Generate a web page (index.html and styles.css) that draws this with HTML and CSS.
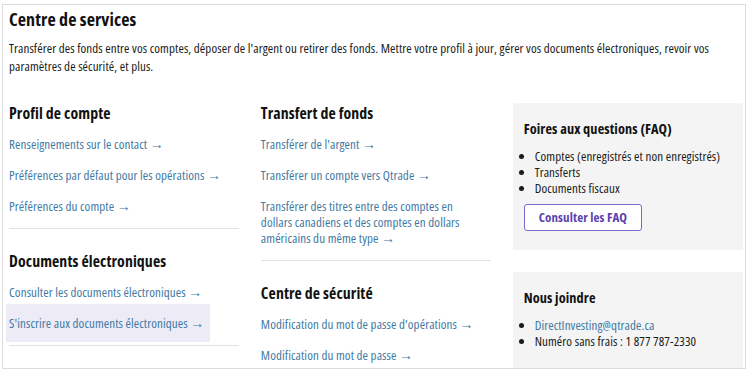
FILE: index.html
```html
<!DOCTYPE html>
<html lang="fr-CA">
<head>
    <meta charset="UTF-8">
    <meta name="viewport" content="width=device-width, initial-scale=1.0">
    <title>Centre de services</title>
    <link rel="stylesheet" href="styles.css">
</head>
<body>
    <div class="container">
        <h1>Centre de services</h1>
        <p class="intro">Transférer des fonds entre vos comptes, déposer de l'argent ou retirer des fonds. Mettre votre profil à jour, gérer vos documents électroniques, revoir vos paramètres de sécurité, et plus.</p>

        <div class="columns">
            <div class="column">
                <div class="link-section">
                    <h2>Profil de compte</h2>
                    <ul class="links">
                        <li><a href="#">Renseignements sur le contact <span class="arrow">→</span></a></li>
                        <li><a href="#">Préférences par défaut pour les opérations <span class="arrow">→</span></a></li>
                        <li><a href="#">Préférences du compte <span class="arrow">→</span></a></li>
                    </ul>
                </div>
                <div class="link-section">
                    <h2>Documents électroniques</h2>
                    <ul class="links">
                        <li><a href="#">Consulter les documents électroniques <span class="arrow">→</span></a></li>
                        <li><a href="#" class="is-hover">S'inscrire aux documents électroniques <span class="arrow">→</span></a></li>
                    </ul>
                </div>
            </div>

            <div class="column">
                <div class="link-section">
                    <h2>Transfert de fonds</h2>
                    <ul class="links">
                        <li><a href="#">Transférer de l'argent <span class="arrow">→</span></a></li>
                        <li><a href="#">Transférer un compte vers Qtrade <span class="arrow">→</span></a></li>
                        <li><a href="#">Transférer des titres entre des comptes en dollars canadiens et des comptes en dollars américains du même type <span class="arrow">→</span></a></li>
                    </ul>
                </div>
                <div class="link-section">
                    <h2>Centre de sécurité</h2>
                    <ul class="links">
                        <li><a href="#">Modification du mot de passe d'opérations <span class="arrow">→</span></a></li>
                        <li><a href="#">Modification du mot de passe <span class="arrow">→</span></a></li>
                    </ul>
                </div>
            </div>

            <div class="column">
                <div class="info-box">
                    <h3>Foires aux questions (FAQ)</h3>
                    <ul class="bullets">
                        <li>Comptes (enregistrés et non enregistrés)</li>
                        <li>Transferts</li>
                        <li>Documents fiscaux</li>
                    </ul>
                    <a href="#" class="btn-outline">Consulter les FAQ</a>
                </div>
                <div class="info-box">
                    <h3>Nous joindre</h3>
                    <ul class="bullets">
                        <li><a href="#">DirectInvesting@qtrade.ca</a></li>
                        <li>Numéro sans frais : 1 877 787-2330</li>
                    </ul>
                </div>
            </div>
        </div>
    </div>
</body>
</html>
```

FILE: styles.css
```css
body {
    font-family: "Open Sans", "DejaVu Sans Condensed", sans-serif;
    font-stretch: 80%;
    letter-spacing: 0.1px;
    color: #1a1a1a;
    background-color: #ffffff;
    margin: 0;
    padding: 0;
}

.container {
    margin: 4px 0 0 2px;
    width: 744px;
    height: 365px;
    box-sizing: border-box;
    border: 1px solid #dcdcdc;
    padding: 3px 2px 0 6px;
    overflow: hidden;
}

h1 {
    font-size: 18px;
    line-height: 22px;
    margin: 0;
    color: #111;
}

.intro {
    font-size: 13px;
    line-height: 18px;
    margin: 9px 0 0;
}

.columns {
    display: grid;
    grid-template-columns: repeat(3, 1fr);
    column-gap: 21.5px;
    margin-top: 28px;
}

.link-section {
    padding-bottom: 6px;
    border-bottom: 1px solid #e2e2e2;
}

.link-section + .link-section {
    margin-top: 22.5px;
}

.link-section h2 {
    font-size: 15.8px;
    line-height: 20px;
    margin: 0 0 5.5px;
    color: #111;
}

.links {
    list-style: none;
    margin: 0;
    padding: 0;
}

.links a {
    display: block;
    padding: 7.5px 10px 7.5px 0;
    font-size: 13px;
    line-height: 16px;
    color: #3f79a3;
    text-decoration: none;
}

.links .arrow {
    font-family: "Liberation Sans", sans-serif;
    font-stretch: normal;
    font-size: 14px;
    line-height: 0;
}

.links a.is-hover {
    width: fit-content;
    margin: -4px 0 -3px -3px;
    padding: 11.5px 6px 10.5px 3px;
    background-color: #edecf6;
}

.info-box {
    background-color: #f4f4f4;
    padding: 17px 11px 19px;
}

.info-box + .info-box {
    margin-top: 22px;
}

.info-box h3 {
    font-size: 14.3px;
    line-height: 18px;
    margin: 0 0 10px;
    color: #111;
}

.bullets {
    margin: 0;
    padding-left: 11px;
    font-size: 13px;
    line-height: 16px;
}

.bullets a {
    color: #3f79a3;
    text-decoration: none;
}

.btn-outline {
    display: inline-block;
    margin-top: 7.5px;
    padding: 5px 14px;
    font-size: 13px;
    line-height: 15px;
    font-weight: bold;
    color: #5a3fae;
    background-color: #ffffff;
    border: 1px solid #7f67c9;
    border-radius: 3px;
    text-decoration: none;
}
```
